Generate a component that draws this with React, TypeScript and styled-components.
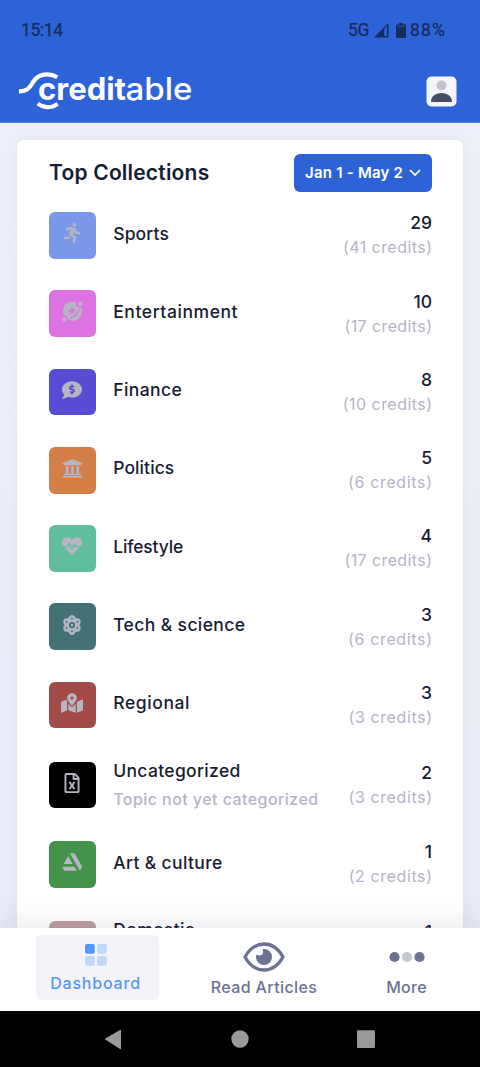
import React from "react";
import styled, { createGlobalStyle } from "styled-components";
import { FaRunning, FaUniversity, FaCommentDollar, FaAtom, FaMapMarkedAlt, FaRegFileExcel, FaArtstation, FaHeartbeat } from "react-icons/fa";

const Global = createGlobalStyle`
  * { box-sizing: border-box; }
  body { margin: 0; font-family: Inter, "Liberation Sans", sans-serif; color: #181c32; }
`;

const Screen = styled.div`
  width: 480px; height: 1067px; overflow: hidden;
  display: flex; flex-direction: column; background: #edf0f7;
`;
const Header = styled.header`
  height: 123px; flex: none; background: #2d63d6; border-bottom: 1px solid #4f7ddd;
`;
const StatusBar = styled.div`
  height: 60px; padding: 0 33px 0 21px; display: flex; align-items: center; justify-content: space-between;
  font: 500 17.5px/20px Roboto, sans-serif; color: #142c5e;
`;
const StatusRight = styled.div`display: flex; align-items: center;`;
const StatusText = styled.span<{ $w: number; $ls: number }>`
  width: ${(p) => p.$w}px; letter-spacing: ${(p) => p.$ls}px; font-weight: 400; white-space: nowrap;
  -webkit-text-stroke: 0.25px #142c5e;
`;
const SignalIcon = styled.svg`margin-left: 5px;`;
const BatteryIcon = styled.svg`margin: 0 4px 0 7px;`;
const Brand = styled.div`
  height: 62px; padding: 0 23px 0 19px; display: flex; align-items: center; justify-content: space-between;
`;

const Main = styled.main`
  flex: 1; min-height: 0; overflow: hidden; padding: 17.4px 17px 0;
  background: linear-gradient(#edf0f7, #e9ebf6);
`;
const Card = styled.section`
  height: 900px; padding: 14px 31px 0 32px; background: #fff; border-radius: 7px;
  box-shadow: 0 0 16px rgba(90, 80, 160, 0.06);
`;
const CardHead = styled.div`display: flex; justify-content: space-between; align-items: center; height: 37.5px;`;
const Title = styled.h1`
  margin: 0; padding-bottom: 2px; font-size: 21px; font-weight: 600; letter-spacing: 0.2px; white-space: nowrap;
`;
const RangeButton = styled.button`
  width: 138px; height: 37.5px; padding: 0 11px 1px; border: 0; border-radius: 6px; background: #2d63d6; color: #fff;
  display: flex; align-items: center; justify-content: space-between;
  font: 600 15px Inter, sans-serif; letter-spacing: 0.22px; white-space: nowrap;
`;
const List = styled.div`padding-top: 20.1px;`;
const Row = styled.div<{ $gap: number }>`
  height: 46.7px; margin-bottom: ${(p) => p.$gap}px; display: flex; align-items: center;
`;
const Tile = styled.div<{ $bg: string }>`
  width: 46.7px; height: 46.7px; flex: none; border-radius: 6px; background: ${(p) => p.$bg};
  color: #b5b5c3; display: flex; align-items: center; justify-content: center; padding-bottom: 4px;
`;
const Names = styled.div<{ $noted?: boolean }>`
  flex: 1; margin-left: 17.5px; white-space: nowrap; padding-bottom: ${(p) => (p.$noted ? 0 : 3.5)}px;
  padding-top: ${(p) => (p.$noted ? 3 : 0)}px;
`;
const Name = styled.div<{ $ls: number }>`
  font-size: 17.5px; line-height: 26px; font-weight: 500; letter-spacing: ${(p) => p.$ls}px;
`;
const Note = styled.div`
  height: 31px; font-size: 16px; line-height: 31px; font-weight: 500; letter-spacing: 0.44px; color: #b5b5c3;
`;
const Figures = styled.div`text-align: right; white-space: nowrap;`;
const Count = styled.div`font-size: 17.5px; line-height: 25px; font-weight: 500;`;
const Credits = styled.div<{ $ls: number }>`
  font-size: 16px; line-height: 25px; color: #b5b5c3;
  letter-spacing: ${(p) => p.$ls}px; margin-right: -${(p) => p.$ls}px;
`;

const Tabs = styled.nav`
  height: 83px; flex: none; position: relative; display: flex; background: #fff; padding: 7px 36px 11px;
  box-shadow: 0 -6px 30px rgba(60, 60, 90, 0.1);
`;
const Tab = styled.div<{ $w: number; $ml?: number; $active?: boolean }>`
  width: ${(p) => p.$w}px; margin-left: ${(p) => p.$ml ?? 0}px; border-radius: 5px;
  background: ${(p) => (p.$active ? "#f4f3f9" : "transparent")}; color: ${(p) => (p.$active ? "#5297fa" : "#6d7193")};
  display: flex; flex-direction: column; align-items: center;
  padding-top: ${(p) => (p.$active ? 9 : 7)}px; padding-right: ${(p) => (p.$active ? 4 : 0)}px;
  font-size: 16px; font-weight: 500; white-space: nowrap;
`;
const TabLabel = styled.span<{ $mt: number; $ls: number }>`
  margin-top: ${(p) => p.$mt}px; line-height: 24px; letter-spacing: ${(p) => p.$ls}px;
`;
const NavBar = styled.footer`height: 56px; flex: none; background: #000;`;

const PlanetIcon = ({ size }: { size: number }) => (
  <svg width={size} height={size} viewBox="0 0 21 21" fill="currentColor">
    <path
      fillRule="evenodd"
      d="M14 1.600C10 0 5.500 .600 3 3.900C.5 7.300.3 11.400 2.300 14.600Q4 14.100 5 15.200Q6 16.200 5.700 18.100C9 20.600 13.500 20.500 16.900 17.300C20.300 14 20.700 9.600 18.900 6.200Q16.500 7 15 5.500Q13.700 4.300 14 1.600ZM10.200 5.600L11.400 8.500L14 8L12 10.300L12.800 13L10.300 11.500L8 13.500L8.400 11L4.500 10.200L8.600 9Z"
    />
    <path d="M17 8Q16 14 8.500 17" fill="none" stroke="#dd73e2" strokeWidth="1.400" />
    <circle cx="18.200" cy="2.700" r="2.200" />
    <circle cx="2.500" cy="18.400" r="2.200" />
  </svg>
);

type Item = {
  name: string; ls: number; noted?: boolean; note?: string; count: number; credits: number; cls: number;
  bg: string; icon: React.ComponentType<{ size: number }>; size: number; gap: number;
};
const items: Item[] = [
  { name: "Sports", ls: 0.15, count: 29, credits: 41, cls: 0.45, bg: "#7b97e8", icon: FaRunning, size: 20, gap: 31.6 },
  { name: "Entertainment", ls: 0.58, count: 10, credits: 17, cls: 0.4, bg: "#dd73e2", icon: PlanetIcon, size: 21, gap: 31.6 },
  { name: "Finance", ls: 0.4, count: 8, credits: 10, cls: 0.45, bg: "#574cd3", icon: FaCommentDollar, size: 20, gap: 31.6 },
  { name: "Politics", ls: 0.1, count: 5, credits: 6, cls: 0.65, bg: "#d47e48", icon: FaUniversity, size: 21, gap: 31.6 },
  { name: "Lifestyle", ls: -0.15, count: 4, credits: 17, cls: 0.4, bg: "#60bd9d", icon: FaHeartbeat, size: 20, gap: 31.6 },
  { name: "Tech & science", ls: 0.38, count: 3, credits: 6, cls: 0.65, bg: "#437176", icon: FaAtom, size: 20, gap: 31.6 },
  { name: "Regional", ls: 0.6, count: 3, credits: 3, cls: 0.6, bg: "#a24b48", icon: FaMapMarkedAlt, size: 22, gap: 33.3 },
  { name: "Uncategorized", ls: 0.33, noted: true, note: "Topic not yet categorized", count: 2, credits: 3, cls: 0.6, bg: "#000", icon: FaRegFileExcel, size: 20, gap: 32.8 },
  { name: "Art & culture", ls: 0.37, count: 1, credits: 2, cls: 0.6, bg: "#45934b", icon: FaArtstation, size: 20, gap: 33.3 },
  { name: "Domestic", ls: 0.4, noted: true, count: 1, credits: 1, cls: 0.6, bg: "#be9da0", icon: FaArtstation, size: 20, gap: 0 },
];

const Logo = () => (
  <svg width="174" height="40" viewBox="0 0 174 40" fill="none">
    <path d="M0 20.300C9 20.300 11 16 14.500 10.500S23 3.400 28 3.400S35 4.300 38.300 6.200" stroke="#fff" strokeWidth="4.200" />
    <path d="M18.700 32.600Q28.700 39.800 38.700 32.800" stroke="#fff" strokeWidth="4" />
    <text x="19" y="28.500" fill="#fff" fontFamily="Inter, sans-serif" fontSize="31" fontWeight="700" textLength="88" lengthAdjust="spacingAndGlyphs">credit</text>
    <text x="106.500" y="28.500" fill="#fff" fontFamily="Inter, sans-serif" fontSize="31" fontWeight="500" textLength="67" lengthAdjust="spacingAndGlyphs">able</text>
  </svg>
);

export default function App() {
  return (
    <Screen>
      <Global />
      <Header>
        <StatusBar>
          <StatusText $w={42} $ls={-0.4}>15:14</StatusText>
          <StatusRight>
            <StatusText $w={21} $ls={-0.3}>5G</StatusText>
            <SignalIcon width="15" height="15" viewBox="0 0 15 15">
              <path d="M0 14.500L14.500 0V14.500Z" fill="#142c5e" />
              <path d="M10.200 6V13H13V3.200Z" fill="#2d63d6" />
            </SignalIcon>
            <BatteryIcon width="10" height="16" viewBox="0 0 10 16">
              <path d="M3 1h4v1.500h2q1 0 1 1V15q0 1-1 1h-8q-1 0-1-1V3.500q0-1 1-1h2z" fill="#142c5e" />
              <path d="M1.500 4.300h7" stroke="#2d63d6" strokeWidth="0.800" />
            </BatteryIcon>
            <StatusText $w={37} $ls={1.2}>88%</StatusText>
          </StatusRight>
        </StatusBar>
        <Brand>
          <Logo />
          <svg width="31" height="31" viewBox="0 0 31 31">
            <rect x="0.500" y="0.500" width="30" height="30" rx="5" fill="#f5f6fb" />
            <circle cx="15.500" cy="9.500" r="4.900" fill="#c3c4cf" />
            <path d="M5 26c0-5.500 4-9 10.500-9S26 20.500 26 26z" fill="#474c68" />
          </svg>
        </Brand>
      </Header>
      <Main>
        <Card>
          <CardHead>
            <Title>Top Collections</Title>
            <RangeButton>
              <span>Jan 1 - May 2</span>
              <svg width="12" height="8" viewBox="0 0 12 8" fill="none" stroke="#fff" strokeWidth="1.700">
                <path d="M1 1l5 5 5-5" />
              </svg>
            </RangeButton>
          </CardHead>
          <List>
            {items.map(({ icon: Icon, ...it }) => (
              <Row key={it.name} $gap={it.gap}>
                <Tile $bg={it.bg}><Icon size={it.size} /></Tile>
                <Names $noted={it.noted}>
                  <Name $ls={it.ls}>{it.name}</Name>
                  {it.noted && <Note>{it.note}</Note>}
                </Names>
                <Figures>
                  <Count>{it.count}</Count>
                  <Credits $ls={it.cls}>({it.credits} credits)</Credits>
                </Figures>
              </Row>
            ))}
          </List>
        </Card>
      </Main>
      <Tabs>
        <Tab $w={123} $active>
          <svg width="22" height="22" viewBox="0 0 22 22" fill="#c0d7fa">
            <rect width="9.800" height="9.800" rx="2" fill="#5297fa" />
            <rect x="12" width="9.800" height="9.800" rx="2" />
            <rect y="12" width="9.800" height="9.800" rx="2" />
            <rect x="12" y="12" width="9.800" height="9.800" rx="2" />
          </svg>
          <TabLabel $mt={4.5} $ls={0.8}>Dashboard</TabLabel>
        </Tab>
        <Tab $w={120} $ml={45}>
          <svg width="42" height="30" viewBox="0 0 42 30">
            <path d="M2 15C7 6 14 2 21 2S35 6 40 15C35 24 28 28 21 28S7 24 2 15Z" fill="none" stroke="#6d7193" strokeWidth="3.300" />
            <path d="M21 7a8 8 0 1 1-8 8q0-1 .3-2.200q5.200 2 6.500-1q.6-2-.3-4.600Q20 7 21 7z" fill="#6d7193" />
          </svg>
          <TabLabel $mt={3} $ls={0.4}>Read Articles</TabLabel>
        </Tab>
        <Tab $w={60} $ml={52.5}>
          <svg width="36" height="30" viewBox="0 0 36 30" fill="#6d7193">
            <circle cx="5.500" cy="15" r="5.100" />
            <circle cx="18" cy="15" r="5.100" fill="#c5c6d4" />
            <circle cx="30.500" cy="15" r="5.100" />
          </svg>
          <TabLabel $mt={3} $ls={0.3}>More</TabLabel>
        </Tab>
      </Tabs>
      <NavBar>
        <svg width="480" height="56" viewBox="0 0 480 56" fill="#999">
          <path d="M104.500 28L120 19Q121 18.500 121 19.500V37.500Q121 38.500 120 38Z" />
          <circle cx="240" cy="28" r="8.700" />
          <rect x="357" y="19.300" width="18" height="17.700" rx="1" />
        </svg>
      </NavBar>
    </Screen>
  );
}
